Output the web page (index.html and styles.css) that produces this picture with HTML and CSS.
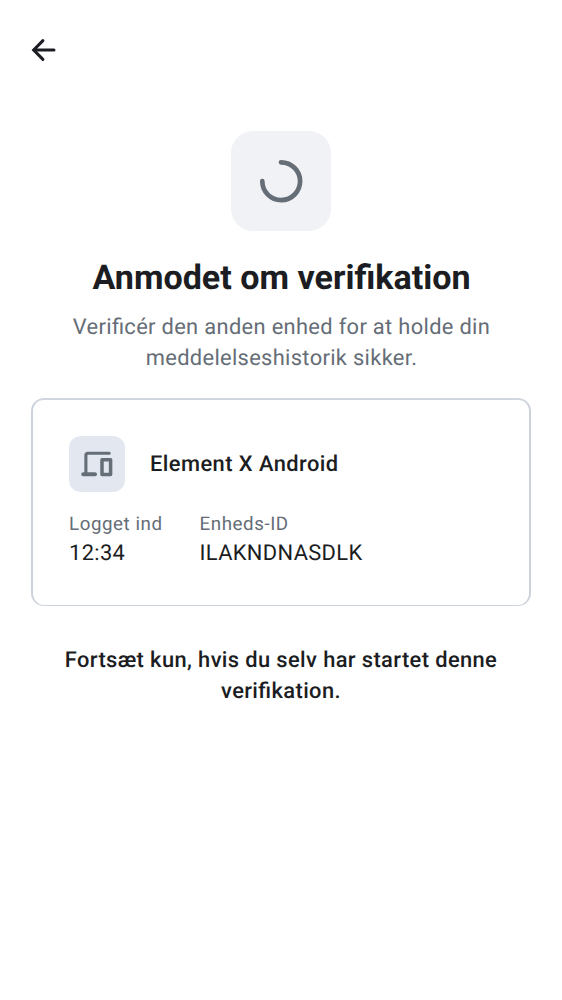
FILE: index.html
```html
<!DOCTYPE html>
<html lang="da">
<head>
<meta charset="utf-8">
<title>Anmodet om verifikation</title>
<link rel="stylesheet" href="styles.css">
</head>
<body>
<header class="top-bar">
  <svg class="back" viewBox="0 0 30 30"><path d="M14.900 5.600 5.700 15l9.200 9.400"/><path d="M6 15H26"/></svg>
</header>
<main class="content">
  <div class="hero">
    <svg class="spinner" viewBox="0 0 44 44"><path d="M22 3.300A18.900 18.900 0 1 1 3.300 22.200"/></svg>
  </div>
  <h1 class="title">Anmodet om verifikation</h1>
  <p class="subtitle">Verificér den anden enhed for at holde din<br>meddelelseshistorik sikker.</p>
  <section class="card">
    <div class="device">
      <span class="device-icon">
        <svg viewBox="0 0 32 32"><path class="base" d="M2.300 26.200H14"/><path d="M4.900 25V7.200Q4.900 5.200 6.900 5.200H28.200"/><path class="phone" d="M21 11.700H29.600V26.500H21Z"/></svg>
      </span>
      <span class="device-name">Element X Android</span>
    </div>
    <dl class="details">
      <div><dt class="label">Logget ind</dt><dd class="value">12:34</dd></div>
      <div><dt class="label">Enheds-ID</dt><dd class="value">ILAKNDNASDLK</dd></div>
    </dl>
  </section>
  <p class="notice">Fortsæt kun, hvis du selv har startet denne<br>verifikation.</p>
</main>
</body>
</html>
```
FILE: styles.css
```css
body { margin: 0; background: #fff; color: #1b1d22; font-family: Roboto, sans-serif; font-feature-settings: "liga" 1; text-rendering: geometricPrecision; }
.top-bar { height: 100px; padding-left: 28px; box-sizing: border-box; display: flex; align-items: center; }
.back { width: 30px; height: 30px; fill: none; stroke: #1b1d22; stroke-width: 3; stroke-linecap: round; stroke-linejoin: miter; }
.content { padding: 31px 31px 0; }
.hero { width: 100px; height: 100px; margin: 0 auto; border-radius: 22px; background: #f0f2f6; display: flex; align-items: center; justify-content: center; }
.spinner { width: 44px; height: 44px; fill: none; stroke: #656d77; stroke-width: 4.700; stroke-linecap: round; }
.title { margin: 26px 0 0; padding-left: 1px; font-size: 34.100px; line-height: 43px; font-weight: 700; text-align: center; }
.subtitle { margin: 12px 0 0; padding-left: 1px; font-size: 21.875px; line-height: 31px; letter-spacing: .33px; color: #656d77; text-align: center; }
.card { box-sizing: border-box; height: 208px; margin-top: 24px; padding: 36px; border: 2px solid #cdd3dc; border-top-color: #d2d7df; border-bottom-width: 1px; border-radius: 13px; }
.device { display: flex; align-items: center; gap: 25px; }
.device-icon { width: 56px; height: 56px; border-radius: 12px; background: #e3e8f0; display: flex; align-items: center; justify-content: center; }
.device-icon svg { width: 32px; height: 32px; fill: none; stroke: #656d77; stroke-width: 3.100; stroke-linecap: round; stroke-linejoin: round; }
.device-icon .base { stroke-width: 4; }
.device-icon .phone { stroke-width: 3.500; }
.device-name { font-size: 21.875px; font-weight: 500; letter-spacing: .44px; line-height: 26px; margin-top: 1px; }
.details { display: flex; gap: 37px; margin: 20px 0 0; }
.label { font-size: 18.750px; line-height: 25px; letter-spacing: .55px; color: #656d77; }
.value { margin: 1px 0 0; font-size: 21.875px; line-height: 31px; letter-spacing: .35px; }
.notice { margin: 39px 0 0; font-size: 21.875px; line-height: 31px; font-weight: 500; letter-spacing: .39px; text-align: center; }
```
